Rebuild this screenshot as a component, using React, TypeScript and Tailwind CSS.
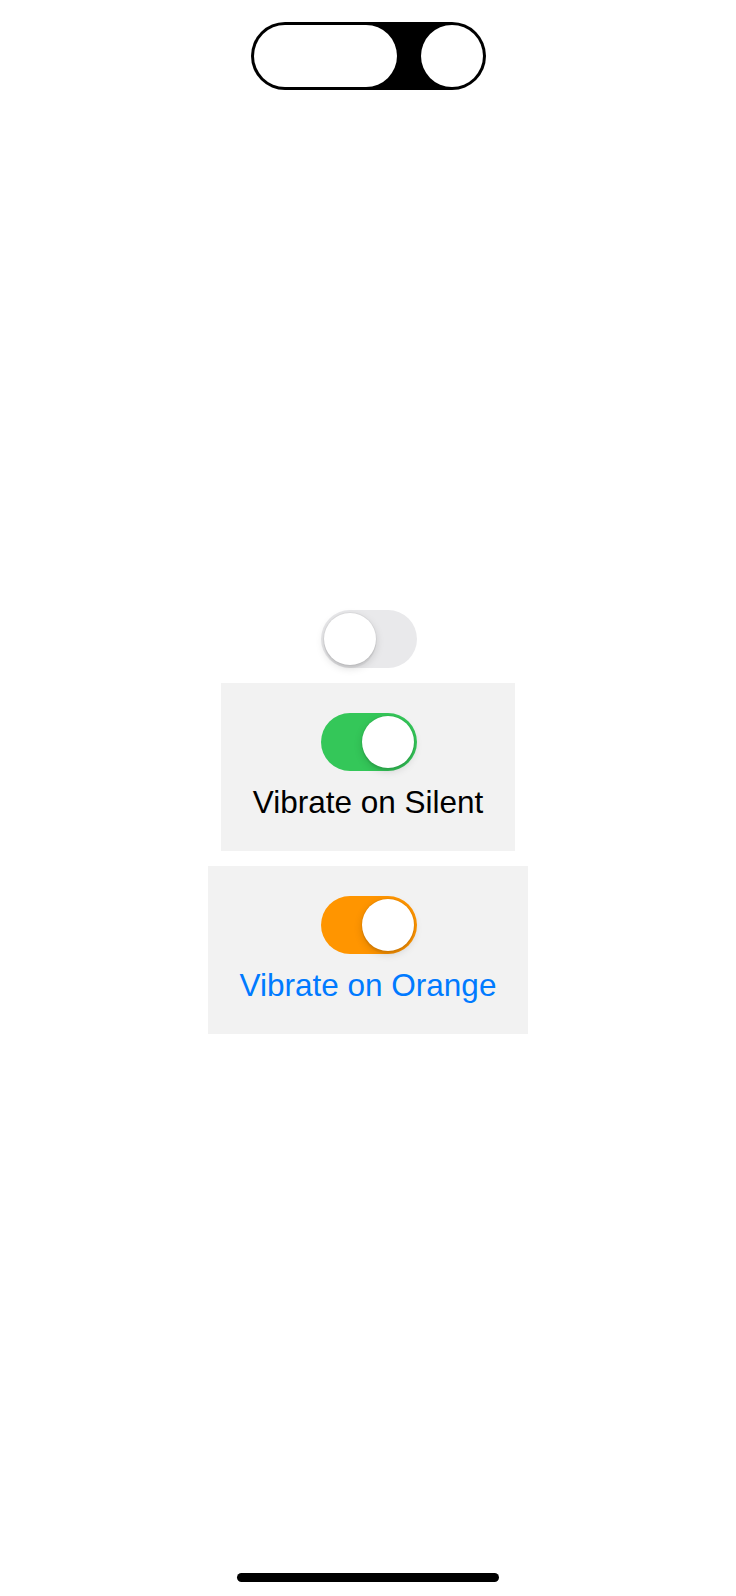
import React from 'react';

type ToggleProps = { on: boolean; color?: string };

function Toggle({ on, color }: ToggleProps) {
    return (
        <div className={`relative ml-[3px] w-[96px] h-[58px] rounded-full ${on ? color : 'bg-[#e9e9eb]'}`}>
            <div
                className={`absolute top-[3px] w-[52px] h-[52px] rounded-full bg-white shadow-[0_3px_8px_rgba(0,0,0,0.15),0_3px_1px_rgba(0,0,0,0.06),0_0_0_1px_rgba(0,0,0,0.04)] ${on ? 'right-[3px]' : 'left-[3px]'}`}
            />
        </div>
    );
}

export default function App() {
    return (
        <div className="w-[736px] h-[1596px] bg-white flex flex-col items-center font-['Liberation_Sans',Arial,sans-serif]">

            {/* --- TOP PILL --- */}
            <div className="mt-[22px] w-[235px] h-[68px] rounded-full bg-black p-[3px] flex justify-between">
                <div className="w-[143px] h-full rounded-full bg-white" />
                <div className="w-[62px] h-full rounded-full bg-white" />
            </div>

            {/* --- SWITCHES --- */}
            <div className="mt-[520px] flex flex-col items-center gap-[15px]">
                <Toggle on={false} />

                <div className="bg-[#f2f2f2] px-[32px] py-[30px] flex flex-col items-center gap-[12px]">
                    <Toggle on color="bg-[#34c759]" />
                    <span className="text-[31.5px] leading-[38px] text-black">Vibrate on Silent</span>
                </div>

                <div className="bg-[#f2f2f2] px-[32px] py-[30px] flex flex-col items-center gap-[12px]">
                    <Toggle on color="bg-[#ff9500]" />
                    <span className="text-[31.5px] leading-[38px] text-[#007aff]">Vibrate on Orange</span>
                </div>
            </div>

            {/* --- HOME INDICATOR --- */}
            <div className="mt-[539px] w-[262px] h-[9px] rounded-full bg-black" />
        </div>
    );
}
